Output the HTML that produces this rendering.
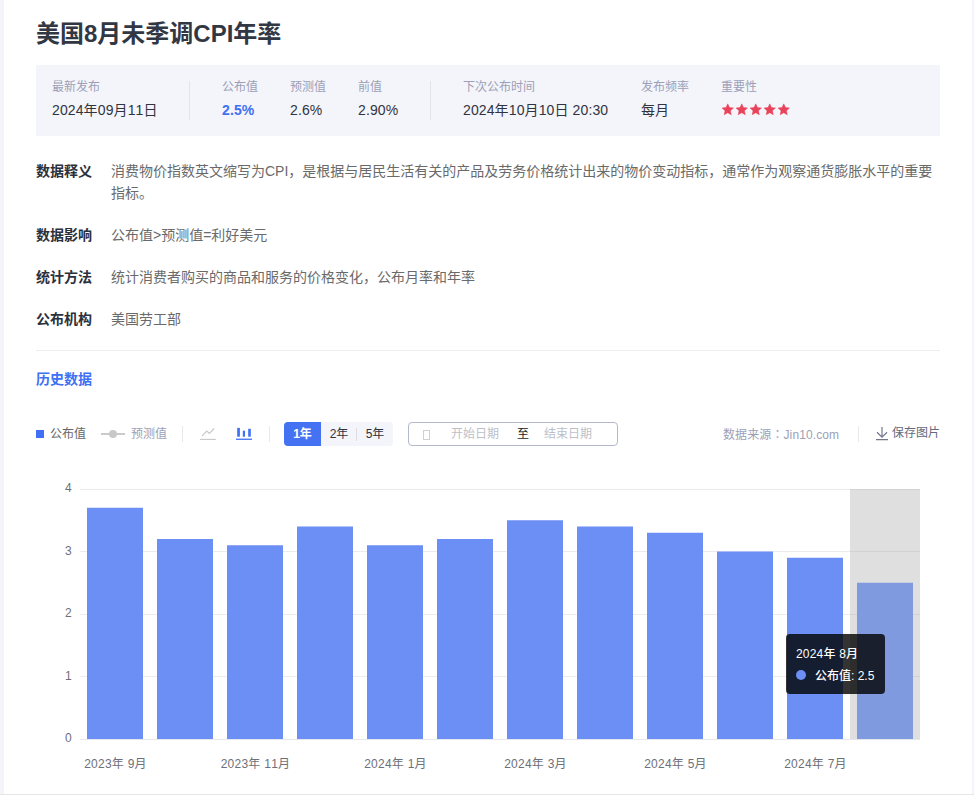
<!DOCTYPE html>
<html lang="zh-CN">
<head>
<meta charset="utf-8">
<title>美国8月未季调CPI年率</title>
<style>
*{margin:0;padding:0;box-sizing:border-box;}
html,body{width:974px;height:801px;overflow:hidden;background:#fff;}
body{font-family:"Liberation Sans","Noto Sans CJK SC",sans-serif;color:#333;position:relative;font-size:14px;}
.abs{position:absolute;white-space:nowrap;}
.strip-l{left:0;top:0;width:4px;height:794px;background:#f4f5fa;}
.strip-r{left:972px;top:0;width:2px;height:794px;background:#f4f5fa;}
.strip-b{left:0;top:794px;width:974px;height:1px;background:#e6e6e6;}
h1{left:36px;top:17px;font-size:24px;line-height:34px;font-weight:bold;color:#323744;}
.info{left:36px;top:65px;width:904px;height:71px;background:#f4f5fa;}
.lbl{font-size:12px;line-height:16px;color:#9b9fb8;top:79px;}
.val{font-size:14px;line-height:20px;color:#303441;top:100px;font-kerning:none;letter-spacing:0.12px;}
.vdiv{width:1px;background:#e2e4ec;top:81px;height:39px;}
.dl{left:36px;font-weight:bold;color:#2b303d;font-size:14px;line-height:22px;}
.dd{left:111px;color:#6a6a6a;font-size:14px;line-height:22px;}
.hr{left:36px;top:350px;width:904px;height:1px;background:#eee;}
.hist{left:36px;top:368px;font-size:14px;line-height:22px;font-weight:bold;color:#4070f4;}
.tb{font-size:12px;line-height:20px;top:424px;}
.ax{font-size:12px;line-height:16px;color:#6e7079;font-kerning:none;letter-spacing:0.25px;}
.bar{position:absolute;background:#6c8ff5;width:56px;}
.grid{position:absolute;left:80px;width:840px;height:1px;background:#ececf0;}
</style>
</head>
<body>
<div class="abs strip-l"></div>
<div class="abs strip-r"></div>
<div class="abs strip-b"></div>

<h1 class="abs">美国8月未季调CPI年率</h1>

<div class="abs info"></div>
<div class="abs lbl" style="left:52px">最新发布</div>
<div class="abs val" style="left:52px">2024年09月11日</div>
<div class="abs vdiv" style="left:189px"></div>
<div class="abs lbl" style="left:222px">公布值</div>
<div class="abs val" style="left:222px;color:#4070f4;font-weight:bold">2.5%</div>
<div class="abs lbl" style="left:290px">预测值</div>
<div class="abs val" style="left:290px">2.6%</div>
<div class="abs lbl" style="left:358px">前值</div>
<div class="abs val" style="left:358px">2.90%</div>
<div class="abs vdiv" style="left:430px"></div>
<div class="abs lbl" style="left:463px">下次公布时间</div>
<div class="abs val" style="left:463px">2024年10月10日 20:30</div>
<div class="abs lbl" style="left:641px">发布频率</div>
<div class="abs val" style="left:641px">每月</div>
<div class="abs lbl" style="left:721px">重要性</div>
<svg class="abs" style="left:721px;top:102px" width="72" height="14" viewBox="0 0 72 14">
  <g fill="#e8435a">
    <path id="st" d="M6.75 1.85 L8.43 5.54 L12.46 6.00 L9.46 8.73 L10.28 12.70 L6.75 10.70 L3.22 12.70 L4.04 8.73 L1.04 6.00 L5.07 5.54 Z" stroke="#e8435a" stroke-width="0.5" stroke-linejoin="round"/>
    <use href="#st" x="14"/><use href="#st" x="28"/><use href="#st" x="42"/><use href="#st" x="56"/>
  </g>
</svg>

<div class="abs dl" style="top:160px">数据释义</div>
<div class="abs dd" style="top:160px;width:829px;white-space:normal">消费物价指数英文缩写为CPI，是根据与居民生活有关的产品及劳务价格统计出来的物价变动指标，通常作为观察通货膨胀水平的重要指标。</div>
<div class="abs dl" style="top:224px">数据影响</div>
<div class="abs dd" style="top:224px">公布值&gt;预测值=利好美元</div>
<div class="abs dl" style="top:266px">统计方法</div>
<div class="abs dd" style="top:266px">统计消费者购买的商品和服务的价格变化，公布月率和年率</div>
<div class="abs dl" style="top:308px">公布机构</div>
<div class="abs dd" style="top:308px">美国劳工部</div>

<div class="abs hr"></div>
<div class="abs hist">历史数据</div>

<!-- toolbar -->
<div class="abs" style="left:36px;top:430px;width:8px;height:8px;background:#4070f4"></div>
<div class="abs tb" style="left:50px;color:#666">公布值</div>
<div class="abs" style="left:101px;top:433px;width:24px;height:2px;background:#cacaca"></div>
<div class="abs" style="left:109px;top:430px;width:8px;height:8px;border-radius:50%;background:#c8c8c8"></div>
<div class="abs tb" style="left:131px;color:#9b9fb8">预测值</div>
<div class="abs" style="left:182px;top:426px;width:1px;height:16px;background:#e8e8ec"></div>
<svg class="abs" style="left:199px;top:426px" width="18" height="16" viewBox="0 0 18 16" fill="none" stroke="#c8c8c8" stroke-width="1.2">
  <path d="M2.9 10.2 L7.8 5.1 L10.3 7.4 L15.2 2.5" stroke-width="1.1"/><path d="M1 13.4 H16.9" stroke-width="1.1"/>
</svg>
<svg class="abs" style="left:235px;top:426px" width="18" height="16" viewBox="0 0 18 16" fill="#4070f4">
  <rect x="2.2" y="1.9" width="2.7" height="8.8"/><rect x="7.8" y="4.7" width="2.2" height="6"/><rect x="13.2" y="2.8" width="2.6" height="7.9"/><rect x="1" y="12.6" width="16" height="1.3"/>
</svg>
<div class="abs" style="left:269px;top:426px;width:1px;height:16px;background:#e8e8ec"></div>
<div class="abs" style="left:284px;top:422px;width:109px;height:24px;background:#f4f5fa;border-radius:4px"></div>
<div class="abs" style="left:284px;top:422px;width:37px;height:24px;background:#4472f3;border-radius:4px 0 0 4px"></div>
<div class="abs tb" style="left:284px;width:37px;text-align:center;color:#fff;font-weight:bold">1年</div>
<div class="abs tb" style="left:321px;width:36px;text-align:center;color:#2e3340">2年</div>
<div class="abs" style="left:356px;top:428px;width:1px;height:13px;background:#dcdde3"></div>
<div class="abs tb" style="left:357px;width:36px;text-align:center;color:#2e3340">5年</div>
<div class="abs" style="left:408px;top:422px;width:210px;height:24px;border:1px solid #b4b8cc;border-radius:4px"></div>
<div class="abs" style="left:423px;top:430px;width:7px;height:10px;border:1px solid #cfd0da"></div>
<div class="abs tb" style="left:451px;top:424px;color:#bcbfc8">开始日期</div>
<div class="abs tb" style="left:517px;top:424px;color:#222">至</div>
<div class="abs tb" style="left:544px;top:424px;color:#bcbfc8">结束日期</div>
<div class="abs tb" style="left:723px;top:424px;color:#9b9fb8;letter-spacing:0.1px">数据来源<span lang="ja" style="font-family:'Noto Sans CJK JP',sans-serif">：</span>Jin10.com</div>
<div class="abs" style="left:858px;top:426px;width:1px;height:16px;background:#e8e8ec"></div>
<svg class="abs" style="left:875px;top:426px" width="14" height="15" viewBox="0 0 14 15" fill="none" stroke="#72778a" stroke-width="1.2">
  <path d="M7 1 V11 M2 6.3 L7 11.2 L12 6.3 M1 13.6 H13"/>
</svg>
<div class="abs tb" style="left:892px;top:423px;color:#636979">保存图片</div>

<!-- chart -->
<div class="grid" style="top:489px"></div>
<div class="grid" style="top:551px"></div>
<div class="grid" style="top:614px"></div>
<div class="grid" style="top:676px"></div>
<div class="grid" style="top:739px;background:#e6e7ec"></div>
<div class="abs ax" style="left:52px;width:20px;text-align:right;top:480px">4</div>
<div class="abs ax" style="left:52px;width:20px;text-align:right;top:543px">3</div>
<div class="abs ax" style="left:52px;width:20px;text-align:right;top:605px">2</div>
<div class="abs ax" style="left:52px;width:20px;text-align:right;top:668px">1</div>
<div class="abs ax" style="left:52px;width:20px;text-align:right;top:730px">0</div>

<svg class="abs" style="left:0;top:480px" width="974" height="270" viewBox="0 480 974 270" fill="#6c8ff5" shape-rendering="auto">
<rect x="87" y="507.75" width="56" height="231.25"/>
<rect x="157" y="539" width="56" height="200"/>
<rect x="227" y="545.25" width="56" height="193.75"/>
<rect x="297" y="526.5" width="56" height="212.5"/>
<rect x="367" y="545.25" width="56" height="193.75"/>
<rect x="437" y="539" width="56" height="200"/>
<rect x="507" y="520.25" width="56" height="218.75"/>
<rect x="577" y="526.5" width="56" height="212.5"/>
<rect x="647" y="532.75" width="56" height="206.25"/>
<rect x="717" y="551.5" width="56" height="187.5"/>
<rect x="787" y="557.75" width="56" height="181.25"/>
<rect x="857" y="582.75" width="56" height="156.25" fill="#769dff"/>
</svg>
<div class="abs" style="left:850px;top:489px;width:70px;height:250px;background:rgba(150,150,150,0.3)"></div>

<div class="abs ax" style="left:65.5px;width:100px;text-align:center;top:756px">2023年 9月</div>
<div class="abs ax" style="left:205.5px;width:100px;text-align:center;top:756px">2023年 11月</div>
<div class="abs ax" style="left:345.5px;width:100px;text-align:center;top:756px">2024年 1月</div>
<div class="abs ax" style="left:485.5px;width:100px;text-align:center;top:756px">2024年 3月</div>
<div class="abs ax" style="left:625.5px;width:100px;text-align:center;top:756px">2024年 5月</div>
<div class="abs ax" style="left:765.5px;width:100px;text-align:center;top:756px">2024年 7月</div>

<!-- tooltip -->
<div class="abs" style="left:786px;top:634px;width:99px;height:60px;background:rgba(0,0,0,0.8);border-radius:4px"></div>
<div class="abs" style="left:796px;top:646px;font-size:12px;line-height:16px;color:#fff;font-weight:500;letter-spacing:0.2px">2024年 8月</div>
<div class="abs" style="left:796px;top:670px;width:10px;height:10px;border-radius:50%;background:#6c8ff5"></div>
<div class="abs" style="left:815px;top:668px;font-size:12px;line-height:16px;color:#fff;font-weight:500">公布值: 2.5</div>
</body>
</html>
